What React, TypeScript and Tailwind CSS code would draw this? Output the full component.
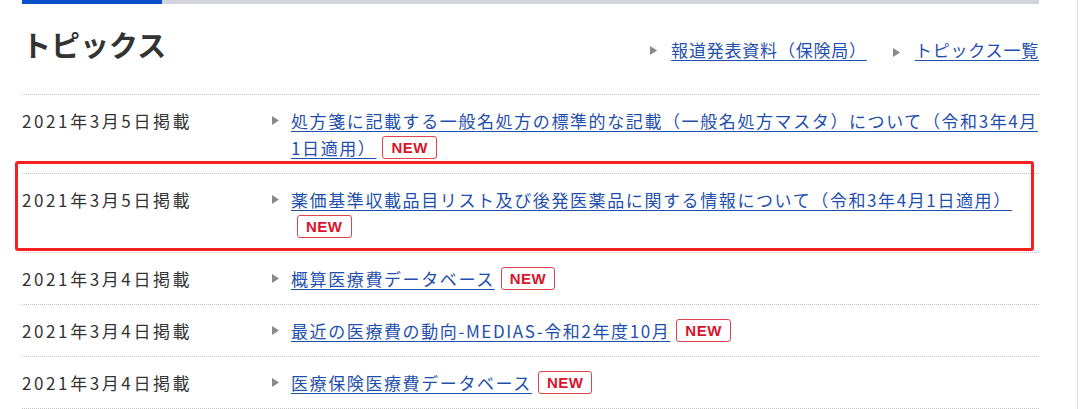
import React from "react";

type Topic = {
  date: string;
  title: string;
  isNew?: boolean;
  highlight?: boolean;
};

const topics: Topic[] = [
  {
    date: "2021年3月5日掲載",
    title: "処方箋に記載する一般名処方の標準的な記載（一般名処方マスタ）について（令和3年4月1日適用）",
    isNew: true,
  },
  {
    date: "2021年3月5日掲載",
    title: "薬価基準収載品目リスト及び後発医薬品に関する情報について（令和3年4月1日適用）",
    isNew: true,
    highlight: true,
  },
  { date: "2021年3月4日掲載", title: "概算医療費データベース", isNew: true },
  { date: "2021年3月4日掲載", title: "最近の医療費の動向-MEDIAS-令和2年度10月", isNew: true },
  { date: "2021年3月4日掲載", title: "医療保険医療費データベース", isNew: true },
];

function Arrow() {
  return (
    <svg width="7" height="9" viewBox="0 0 7 9" className="inline-block">
      <polygon points="0,0 7,4.5 0,9" fill="#8a8a8a" />
    </svg>
  );
}

function NewBadge() {
  return (
    <span className="relative top-[2px] ml-[6px] inline-block rounded-[3px] border border-[#e0424f] bg-white px-[8px] align-top font-['Liberation_Sans',sans-serif] text-[15px] leading-[21px] font-bold tracking-[0.5px] text-[#d9142b]">
      NEW
    </span>
  );
}

function TopicRow({ topic }: { topic: Topic }) {
  return (
    <li className="relative flex border-b border-dotted border-[#c3c3c3] py-[12px] text-[17px] leading-[27px]">
      <div className="w-[250px] shrink-0 tracking-[2.6px] text-[#333]">{topic.date}</div>
      <div className="flex h-[27px] w-[19px] shrink-0 items-center">
        <Arrow />
      </div>
      <div className="flex-1 tracking-[1.6px]">
        <a href="#" className="text-[#1f4fae] underline decoration-1 underline-offset-[3px]">
          {topic.title}
        </a>
        {topic.isNew && <NewBadge />}
      </div>
      {topic.highlight && (
        <div className="pointer-events-none absolute top-[-13px] right-[5px] bottom-[1px] left-[-7px] rounded-[3px] border-[3px] border-[#f5201f]" />
      )}
    </li>
  );
}

export default function App() {
  return (
    <div className="h-[409px] w-[1080px] overflow-hidden bg-white font-['Noto_Sans_CJK_JP',sans-serif]">
      <div className="h-full w-[1078px] border-r border-[#dcdde1]">
        <div className="ml-[22px] w-[1017px]">
          <div className="flex h-[4px]">
            <div className="w-[140px] bg-[#0b4fc9]" />
            <div className="flex-1 bg-[#d1d4dd]" />
          </div>

          <div className="flex h-[91px] items-start justify-between border-b border-dotted border-[#c3c3c3] pt-[20px]">
            <h2 className="text-[29px] leading-[40px] font-bold text-[#333]">トピックス</h2>
            <div className="mt-[13px] flex items-center text-[17px] leading-[26px] tracking-[0.8px]">
              <Arrow />
              <a href="#" className="ml-[14px] text-[#1f4fae] underline decoration-1 underline-offset-[3px]">
                報道発表資料（保険局）
              </a>
              <span className="ml-[26px]">
                <Arrow />
              </span>
              <a href="#" className="ml-[15px] text-[#1f4fae] underline decoration-1 underline-offset-[3px]">
                トピックス一覧
              </a>
            </div>
          </div>

          <ul>
            {topics.map((t, i) => (
              <TopicRow key={i} topic={t} />
            ))}
          </ul>
        </div>
      </div>
    </div>
  );
}
